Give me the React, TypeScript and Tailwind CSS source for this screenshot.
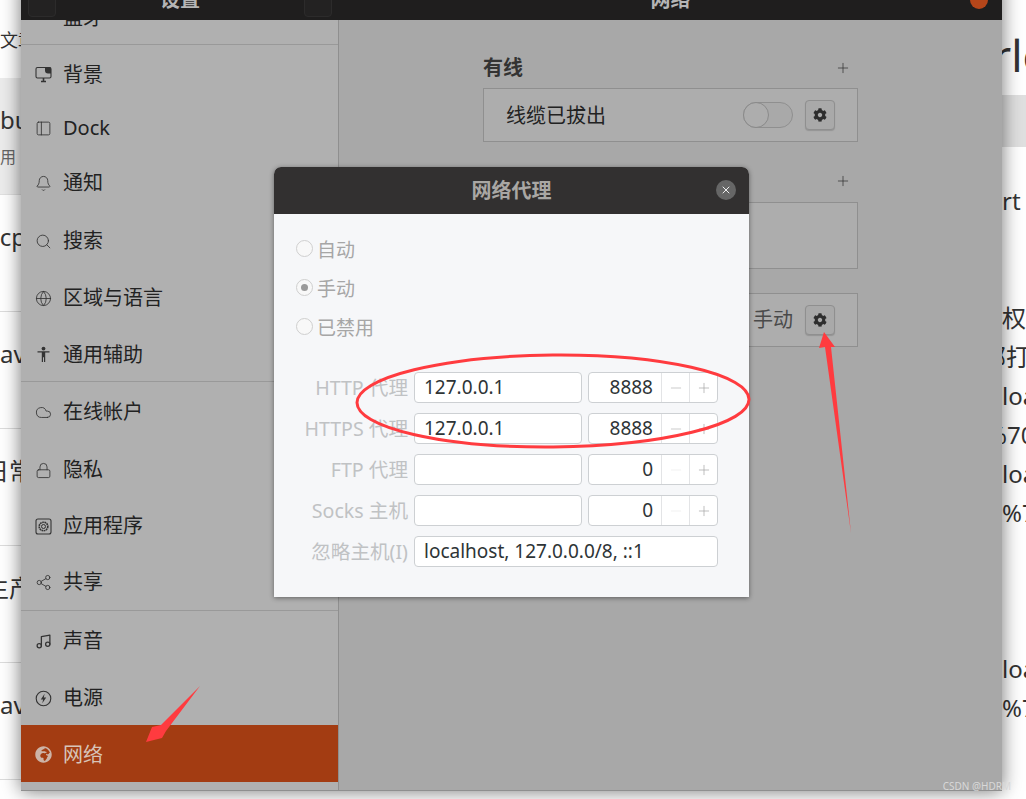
import { Bell, Cloud, Globe, Lock, Minus, Music, PanelLeft, Plus, Search, Share2, X } from "lucide-react";
import { FaCog, FaGlobeAfrica } from "react-icons/fa";
import type { ReactNode } from "react";

const FONT = "font-['Noto_Sans','Noto_Sans_CJK_SC',sans-serif]";
const ICON = "h-[17px] w-[17px] text-[#333]";

const BackgroundIcon = () => (
  <svg viewBox="0 0 17 17" className={ICON} fill="none" stroke="currentColor" strokeWidth="1.1">
    <rect x="1" y="1.5" width="15" height="10.5" rx="1.5" />
    <path d="M10 1.5h6v6h-3a3 3 0 0 1-3-3z" fill="currentColor" stroke="none" />
    <path d="M6 15.5h5M8.5 12v3.5" strokeWidth="1.6" />
  </svg>
);

const PersonIcon = () => (
  <svg viewBox="0 0 17 17" className={ICON} fill="currentColor">
    <circle cx="8.5" cy="2.6" r="1.9" />
    <path d="M2.5 5.2h12v1.4H10.200V16H9V11.300H8V16H6.800V6.600H2.500z" />
  </svg>
);

const AppsIcon = () => (
  <svg viewBox="0 0 17 17" className={ICON} fill="none" stroke="currentColor">
    <rect x="1" y="1" width="15" height="15" rx="2" strokeWidth="1.1" />
    <circle cx="8.5" cy="8.5" r="4.3" strokeWidth="1.6" strokeDasharray="1.7 0.6" />
    <circle cx="8.500" cy="8.500" r="2" strokeWidth="1" />
  </svg>
);

const PowerIcon = () => (
  <svg viewBox="0 0 17 17" className={ICON} fill="none" stroke="currentColor">
    <circle cx="8.5" cy="8.5" r="7.3" strokeWidth="1.1" />
    <path d="M9.600 3.800 5.800 9.400h2.300l-.8 3.800 3.900-5.700H8.800z" fill="currentColor" stroke="none" />
  </svg>
);

const menuGroups: { label: string; icon: ReactNode; height: string }[][] = [
  [
    { label: "背景", icon: <BackgroundIcon />, height: "h-[57px]" },
    { label: "Dock", icon: <PanelLeft className={ICON} strokeWidth={1.2} />, height: "h-[50px]" },
    { label: "通知", icon: <Bell className={ICON} strokeWidth={1.2} />, height: "h-[60px]" },
    { label: "搜索", icon: <Search className={ICON} strokeWidth={1.2} />, height: "h-[56px]" },
    { label: "区域与语言", icon: <Globe className={ICON} strokeWidth={1.2} />, height: "h-[58px]" },
    { label: "通用辅助", icon: <PersonIcon />, height: "h-[55px]" },
  ],
  [
    { label: "在线帐户", icon: <Cloud className={ICON} strokeWidth={1.2} />, height: "h-[58px]" },
    { label: "隐私", icon: <Lock className={ICON} strokeWidth={1.2} />, height: "h-[58px]" },
    { label: "应用程序", icon: <AppsIcon />, height: "h-[54px]" },
    { label: "共享", icon: <Share2 className={ICON} strokeWidth={1.2} />, height: "h-[58px]" },
  ],
  [
    { label: "声音", icon: <Music className={ICON} strokeWidth={1.8} />, height: "h-[58px]" },
    { label: "电源", icon: <PowerIcon />, height: "h-[56px]" },
  ],
];

const MenuRow = ({ label, icon, height }: { label: string; icon: ReactNode; height: string }) => (
  <div className={`flex items-center gap-[11px] pl-[14px] pt-[2px] text-[20px] text-[#222] ${height}`}>
    <span className="flex w-[17px] justify-center">{icon}</span>
    <span>{label}</span>
  </div>
);

const Sidebar = () => (
  <aside className="flex w-[318px] shrink-0 flex-col overflow-hidden border-r border-[#8f8f8f] bg-[#b0b0b0]">
    <div className="-mt-[29px] flex h-[54px] shrink-0 items-center gap-[11px] border-b border-[#999] pl-[14px] text-[20px] text-[#222]">
      <span className="h-[14px] w-[17px]" />
      <span>蓝牙</span>
    </div>
    {menuGroups.map((group, index) => (
      <div key={index} className={index < 2 ? "border-b border-[#999]" : ""}>
        {group.map((item) => (
          <MenuRow key={item.label} {...item} />
        ))}
      </div>
    ))}
    <div className="flex h-[57px] shrink-0 items-center gap-[11px] bg-[#a33c12] pl-[14px] pt-[2px] text-[20px] text-[#d8c4b8]">
      <span className="flex w-[17px] justify-center">
        <FaGlobeAfrica className="h-[17px] w-[17px] text-[#cdb3a6]" />
      </span>
      <span>网络</span>
    </div>
  </aside>
);

const GearButton = () => (
  <button className="flex h-[30px] w-[30px] items-center justify-center rounded-[4px] border border-[#8f8f8f] bg-[#a9a9a9] text-[#2e2e2e] shadow-[0_1px_1px_rgba(0,0,0,0.15)]">
    <FaCog className="h-[14px] w-[14px]" />
  </button>
);

const SectionHead = ({ title }: { title?: string }) => (
  <div className="flex h-[24px] items-center justify-between pr-[7px]">
    <span className="text-[20px] font-bold text-[#333]">{title}</span>
    <Plus className="h-[16px] w-[16px] text-[#333]" strokeWidth={1.1} />
  </div>
);

const NetworkPanel = () => (
  <main className="flex flex-1 flex-col bg-[#a8a8a8] pl-[144px] pr-[144px] pt-[36px]">
    <SectionHead title="有线" />
    <div className="mt-[8px] flex h-[54px] items-center border border-[#8f8f8f] bg-[#adadad] pl-[22px] pr-[22px]">
      <span className="flex-1 pt-[2px] text-[20px] text-[#222]">线缆已拔出</span>
      <span className="mr-[12px] flex h-[26px] w-[50px] rounded-full border border-[#8f8f8f] bg-[#a9a9a9]">
        <span className="-ml-px -mt-px h-[26px] w-[26px] rounded-full border border-[#8a8a8a] bg-[#adadad]" />
      </span>
      <GearButton />
    </div>
    <div className="mt-[27px]">
      <SectionHead />
    </div>
    <div className="mt-[9px] h-[67px] border border-[#8f8f8f] bg-[#adadad]" />
    <div className="mt-[24px] flex h-[54px] items-center justify-end border border-[#8f8f8f] bg-[#adadad] pr-[22px]">
      <span className="mr-[12px] text-[20px] text-[#4a4a4a]">手动</span>
      <GearButton />
    </div>
  </main>
);

const Radio = ({ label, checked }: { label: string; checked?: boolean }) => (
  <div className="flex h-[39px] items-center gap-[4px]">
    <span className="flex h-[17px] w-[17px] items-center justify-center rounded-full border border-[#cfcfcf] bg-[#f8f8f8]">
      {checked && <span className="h-[7px] w-[7px] rounded-full bg-[#9a9a9a]" />}
    </span>
    <span className="mt-[3px] text-[19px] text-[#a6a6a6]">{label}</span>
  </div>
);

const fieldClass = "h-[31px] rounded-[4px] border border-[#cdd0d3] bg-white text-[19px] text-[#2e3436]";

const ProxyRow = ({ label, host, port, minus }: { label: string; host: string; port: string; minus: string }) => (
  <div className="flex items-center pr-[31px]">
    <span className="mr-[6px] flex-1 pt-[1px] text-right text-[19.6px] text-[#c0c2c4]">{label}</span>
    <div className={`flex w-[168px] items-center pl-[9px] ${fieldClass}`}>{host}</div>
    <div className={`ml-[6px] flex w-[130px] items-center ${fieldClass}`}>
      <span className="w-[72px] pr-[8px] text-right">{port}</span>
      <span className={`flex h-full w-[28px] items-center justify-center border-l border-[#e3e4e6] ${minus}`}>
        <Minus className="h-[16px] w-[16px]" strokeWidth={1.1} />
      </span>
      <span className="flex h-full flex-1 items-center justify-center border-l border-[#e3e4e6] text-[#a8a8a8]">
        <Plus className="h-[16px] w-[16px]" strokeWidth={1.1} />
      </span>
    </div>
  </div>
);

const ProxyDialog = () => (
  <section className="absolute left-[274px] top-[167px] w-[475px] overflow-hidden rounded-t-[7px] bg-[#f6f7f9] shadow-[0_1px_5px_rgba(0,0,0,0.45)]">
    <header className="flex h-[47px] items-center justify-center bg-[#323030]">
      <h2 className="text-[20px] font-bold text-[#a9a7a4]">网络代理</h2>
      <span className="absolute right-[13px] top-[13px] flex h-[20px] w-[20px] items-center justify-center rounded-full bg-[#666] text-white">
        <X className="h-[12px] w-[12px]" strokeWidth={1.8} />
      </span>
    </header>
    <div className="pb-[30px] pt-[15px]">
      <div className="pl-[22px]">
        <Radio label="自动" />
        <Radio label="手动" checked />
        <Radio label="已禁用" />
      </div>
      <div className="mt-[26px] flex flex-col gap-[10px]">
        <ProxyRow label="HTTP 代理" host="127.0.0.1" port="8888" minus="text-[#b8b8b8]" />
        <ProxyRow label="HTTPS 代理" host="127.0.0.1" port="8888" minus="text-[#b8b8b8]" />
        <ProxyRow label="FTP 代理" host="" port="0" minus="text-[#ececec]" />
        <ProxyRow label="Socks 主机" host="" port="0" minus="text-[#ececec]" />
        <div className="flex items-center pr-[31px]">
          <span className="mr-[6px] flex-1 pt-[1px] text-right text-[19.6px] text-[#c0c2c4]">忽略主机(I)</span>
          <div className={`flex w-[304px] items-center pl-[9px] ${fieldClass}`}>localhost, 127.0.0.0/8, ::1</div>
        </div>
      </div>
    </div>
  </section>
);

const SettingsWindow = () => (
  <div className="absolute left-[21px] top-[-20px] flex h-[811px] w-[981px] flex-col border-b border-[#8f8f8f] shadow-[0_0_18px_rgba(0,0,0,0.55)]">
    <div className="relative flex h-[40px] shrink-0 items-center bg-[#1f1e1e] text-[20px] font-bold text-[#b5b5b5]">
      <span className="ml-[7px] h-[33px] w-[28px] rounded-[4px] border border-[#2c2b2b] bg-[#232222]" />
      <span className="flex-1 text-center">设置</span>
      <span className="mr-[7px] h-[33px] w-[28px] rounded-[4px] border border-[#2c2b2b] bg-[#232222]" />
      <span className="w-[663px] text-center">网络</span>
      <span className="absolute right-[14px] top-[11px] h-[18px] w-[18px] rounded-full bg-[#b5461a]" />
    </div>
    <div className="flex min-h-0 flex-1 overflow-hidden">
      <Sidebar />
      <NetworkPanel />
    </div>
  </div>
);

const leftRows = [
  { title: "bu", sub: "用", offset: "ml-0", active: true },
  { title: "tcp", offset: "-ml-[9px]" },
  { title: "av", offset: "ml-0" },
  { title: "日常", offset: "-ml-[15px]" },
  { title: "生产", offset: "-ml-[15px]" },
  { title: "av", offset: "ml-0" },
];

const LeftStrip = () => (
  <div className="w-[21px] shrink-0 overflow-hidden text-[24px] text-[#333]">
    <div className="h-[78px] whitespace-nowrap pt-[26px] text-[18px] leading-[28px]">文章</div>
    {leftRows.map((row, index) => (
      <div key={index} className={`h-[117px] border-b pt-[28px] ${row.active ? "border-[#e0e0e0] bg-[#ececec]" : "border-[#dcdcdc]"}`}>
        <div className={`whitespace-nowrap leading-[28px] ${row.offset}`}>{row.title}</div>
        {row.sub && <div className="mt-[11px] text-[16px] leading-[24px] text-[#666]">{row.sub}</div>}
      </div>
    ))}
  </div>
);

const rightLines = [
  { text: "rt", offset: "ml-0" },
  { text: "", offset: "" },
  { text: "", offset: "" },
  { text: "权", offset: "ml-0" },
  { text: "部打", offset: "-ml-[20px]" },
  { text: "loa", offset: "ml-0" },
  { text: "%70", offset: "-ml-[15px]" },
  { text: "loa", offset: "ml-0" },
  { text: "%7", offset: "ml-0" },
  { text: "", offset: "" },
  { text: "", offset: "" },
  { text: "", offset: "" },
  { text: "loa", offset: "ml-0" },
  { text: "%7", offset: "ml-0" },
];

const RightStrip = () => (
  <div className="w-[24px] shrink-0 overflow-hidden text-[24px] text-[#333]">
    <div className="-ml-[9px] h-[95px] whitespace-nowrap pt-[25px] text-[44px] leading-[60px]">rle</div>
    <div className="h-[52px] bg-[#e0e0e0]" />
    <div className="pt-[34px]">
      {rightLines.map((line, index) => (
        <div key={index} className={`h-[39px] whitespace-nowrap leading-[39px] ${line.offset}`}>
          {line.text}
        </div>
      ))}
    </div>
  </div>
);

// hand-drawn markup on top of the screenshot
const Annotations = () => (
  <svg className="pointer-events-none absolute left-0 top-0 h-[799px] w-[1026px]" viewBox="0 0 1026 799">
    <ellipse cx="553" cy="401" rx="196" ry="46" fill="none" stroke="#ff3b3f" strokeWidth="3" transform="rotate(-0.5 553 401)" />
    <polygon points="200,686 161,725 152,727 146,742 162,738 166,731" fill="#ff3b3f" />
    <polygon points="824,332 819,348 825,347 851,533 831,347 835,347" fill="#ff3b3f" />
  </svg>
);

export default function App() {
  return (
    <div className={`relative flex h-[799px] w-[1026px] justify-between overflow-hidden bg-white ${FONT}`}>
      <LeftStrip />
      <RightStrip />
      <SettingsWindow />
      <ProxyDialog />
      <Annotations />
      <span className="absolute bottom-[6px] right-[15px] text-[10px] leading-[14px] text-[#d8d8d8]">CSDN @HDRM</span>
    </div>
  );
}
